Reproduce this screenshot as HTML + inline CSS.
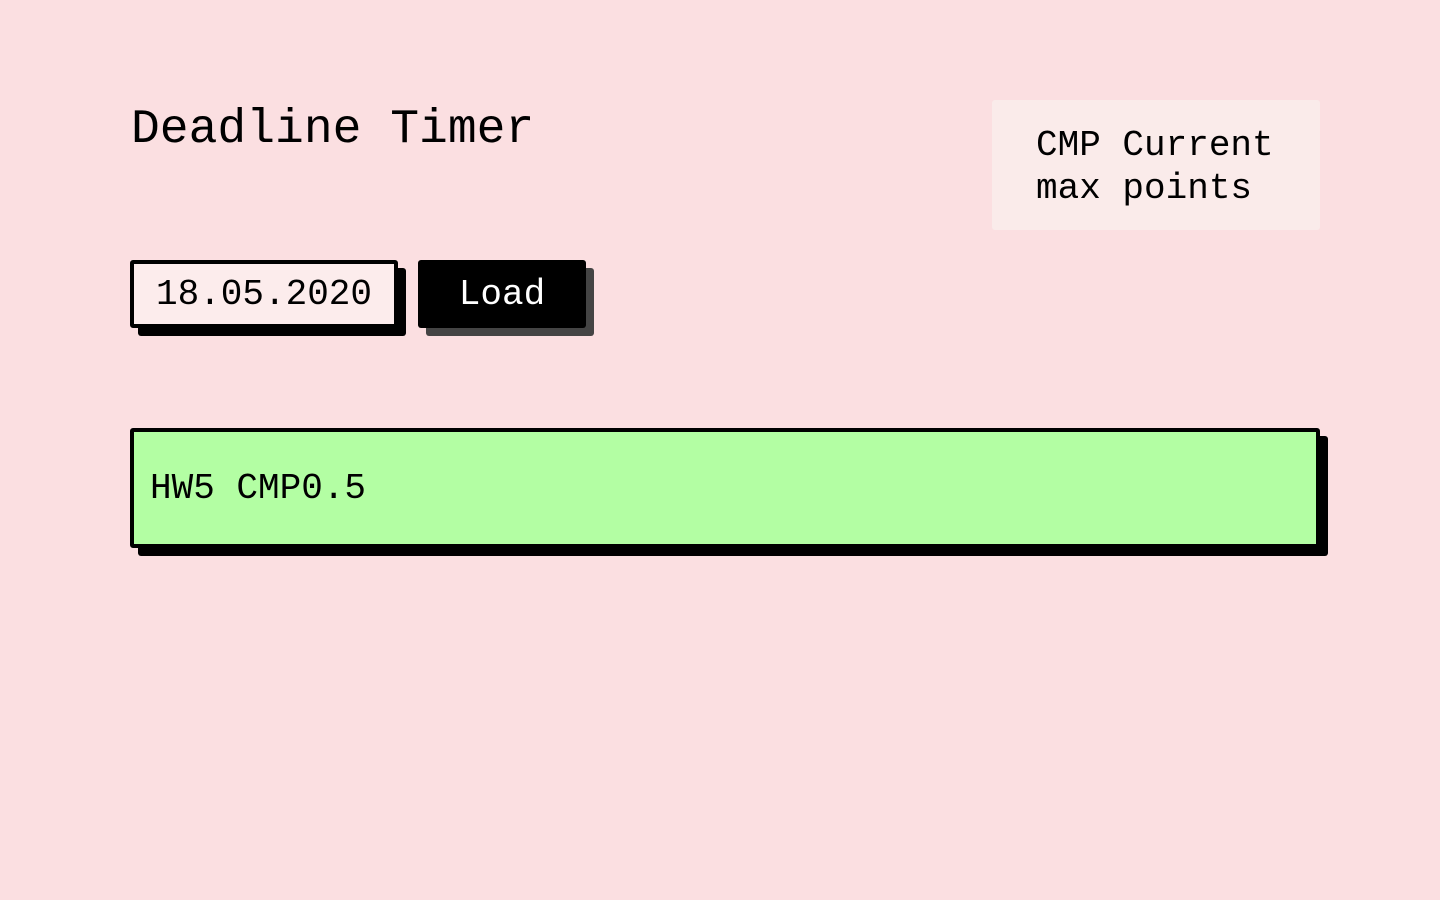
<!DOCTYPE html>
<html><head><style>
body{margin:0;width:1440px;height:900px;background:#fbdfe1;font-family:"Liberation Mono",monospace;color:#000;position:relative;overflow:hidden}
.a{position:absolute}
h1{position:absolute;left:131px;top:101px;margin:0;font-size:48px;font-weight:normal;line-height:58px}
.info{left:992px;top:100px;width:328px;height:130px;background:#faebea;border-radius:3px;box-sizing:border-box;padding:24px 0 0 44px;font-size:36px;line-height:43px}
.inp{left:130px;top:260px;width:268px;height:68px;box-sizing:border-box;border:4px solid #000;background:#fcecec;border-radius:3px;box-shadow:8px 8px 0 #000;font-size:36px;line-height:62px;text-align:center}
.btn{left:418px;top:260px;width:168px;height:68px;background:#000;color:#fff;border-radius:3px;box-shadow:8px 8px 0 #444;font-size:36px;line-height:70px;text-align:center}
.bar{left:130px;top:428px;width:1190px;height:120px;box-sizing:border-box;border:4px solid #000;background:#b3fea3;border-radius:3px;box-shadow:8px 8px 0 #000;font-size:36px;line-height:114px;padding-left:16px}
</style></head><body>
<h1>Deadline Timer</h1>
<div class="a info">CMP Current<br>max points</div>
<div class="a inp">18.05.2020</div>
<div class="a btn">Load</div>
<div class="a bar">HW5 CMP0.5</div>
</body></html>
